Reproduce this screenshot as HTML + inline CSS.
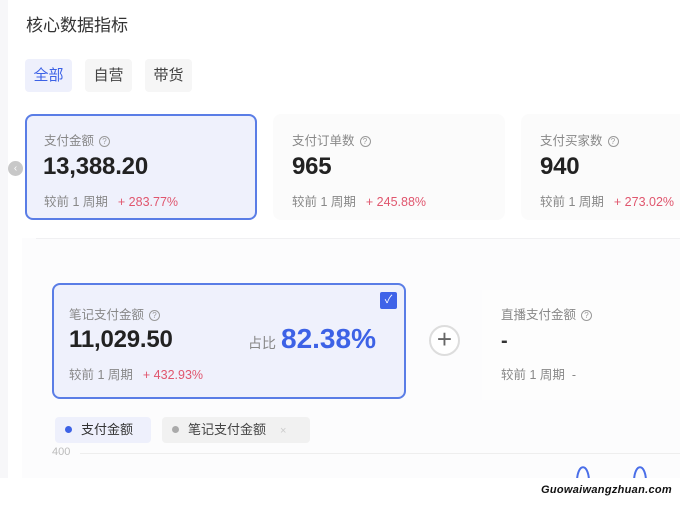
<!DOCTYPE html>
<html><head><meta charset="utf-8"><style>
*{margin:0;padding:0;box-sizing:border-box}
body{width:680px;height:506px;overflow:hidden;background:#fff;font-family:"Liberation Sans","Noto Sans CJK SC",sans-serif;position:relative;color:#222}
.abs{position:absolute}
.strip{left:0;top:0;width:8px;height:478px;background:#f7f7f9}
.title{left:26px;top:11px;font-size:17px;color:#333}
.tab{top:59px;height:33px;width:47px;border-radius:4px;font-size:15px;line-height:33px;text-align:center;background:#f6f6f6;color:#444}
.card{top:114px;width:232px;height:106px;border-radius:8px;background:#fbfbfb}
.lbl{font-size:12.5px;color:#888}
.q{display:inline-block;width:11px;height:11px;border:1px solid #999;border-radius:50%;font-size:8px;line-height:9px;text-align:center;color:#999;margin-left:5px;vertical-align:1px}
.num{font-size:24px;font-weight:bold;color:#222;letter-spacing:-0.2px}
.cmp{font-size:12.5px;color:#888}
.cmp b{font-weight:normal;color:#e0566e;margin-left:10px}
</style></head><body>
<div class="abs strip"></div>
<div class="abs title">核心数据指标</div>
<div class="abs tab" style="left:25px;background:#eef0fc;color:#3d62e6">全部</div>
<div class="abs tab" style="left:85px">自营</div>
<div class="abs tab" style="left:145px">带货</div>

<div class="abs" style="left:8px;top:161px;width:15px;height:15px;border-radius:50%;background:#c8c8c8;color:#fff;font-size:10px;line-height:15px;text-align:center">‹</div>

<div class="abs card" style="left:25px;border:2px solid #5a7de6;background:#eff1fc;width:232px"></div>
<div class="abs lbl" style="left:44px;top:130px">支付金额<span class="q">?</span></div>
<div class="abs num" style="left:43px;top:153px">13,388.20</div>
<div class="abs cmp" style="left:44px;top:191px">较前 1 周期<b>+ 283.77%</b></div>

<div class="abs card" style="left:273px"></div>
<div class="abs lbl" style="left:292px;top:130px">支付订单数<span class="q">?</span></div>
<div class="abs num" style="left:292px;top:153px">965</div>
<div class="abs cmp" style="left:292px;top:191px">较前 1 周期<b>+ 245.88%</b></div>

<div class="abs card" style="left:521px"></div>
<div class="abs lbl" style="left:540px;top:130px">支付买家数<span class="q">?</span></div>
<div class="abs num" style="left:540px;top:153px">940</div>
<div class="abs cmp" style="left:540px;top:191px">较前 1 周期<b>+ 273.02%</b></div>

<div class="abs" style="left:22px;top:238px;width:658px;height:240px;background:#fcfcfd"></div>
<div class="abs" style="left:36px;top:238px;width:644px;height:1px;background:#f0f0f2"></div>

<div class="abs" style="left:52px;top:283px;width:354px;height:116px;border:2px solid #5a7de6;border-radius:8px;background:#eff1fc"></div>
<div class="abs" style="left:380px;top:292px;width:17px;height:17px;border-radius:2px;background:#3f63e8;color:#fff;font-size:11px;line-height:17px;text-align:center">✓</div>
<div class="abs lbl" style="left:69px;top:304px">笔记支付金额<span class="q">?</span></div>
<div class="abs num" style="left:69px;top:326px">11,029.50</div>
<div class="abs" style="left:248px;top:333px;font-size:14px;color:#888">占比</div>
<div class="abs" style="left:281px;top:323px;font-size:28px;font-weight:bold;color:#3d62e6">82.38%</div>
<div class="abs cmp" style="left:69px;top:364px">较前 1 周期<b>+ 432.93%</b></div>

<div class="abs" style="left:429px;top:325px;width:31px;height:31px;border-radius:50%;border:2px solid #ddd;background:#fff;color:#666;font-size:26px;line-height:25px;text-align:center">+</div>

<div class="abs" style="left:482px;top:290px;width:198px;height:110px;background:#fdfdfd"></div>
<div class="abs lbl" style="left:501px;top:304px">直播支付金额<span class="q">?</span></div>
<div class="abs" style="left:501px;top:330px;font-size:20px;font-weight:bold;color:#333">-</div>
<div class="abs cmp" style="left:501px;top:364px">较前 1 周期 &nbsp;-</div>

<div class="abs" style="left:55px;top:417px;width:96px;height:26px;border-radius:4px;background:#eef0fc;font-size:13px;line-height:26px;padding-left:10px;color:#333"><span style="display:inline-block;width:7px;height:7px;border-radius:50%;background:#3d62e6;margin-right:9px;vertical-align:1px"></span>支付金额</div>
<div class="abs" style="left:162px;top:417px;width:148px;height:26px;border-radius:4px;background:#f1f1f1;font-size:13px;line-height:26px;padding-left:10px;color:#444"><span style="display:inline-block;width:7px;height:7px;border-radius:50%;background:#aaa;margin-right:9px;vertical-align:1px"></span>笔记支付金额<span style="color:#ccc;margin-left:14px;font-size:11px">×</span></div>

<div class="abs" style="left:52px;top:446px;font-size:11px;color:#bbb">400</div>
<div class="abs" style="left:80px;top:453px;width:600px;height:1px;background:#eee"></div>
<svg class="abs" style="left:570px;top:455px" width="110" height="25"><path d="M7 25 C8 8 18 8 19 25 M64 25 C65 8 75 8 76 25" stroke="#4a6ee8" stroke-width="2" fill="none"/></svg>

<div class="abs" style="left:0;top:478px;width:680px;height:28px;background:#fff"></div>
<div class="abs" style="left:541px;top:484px;font-size:11px;font-weight:bold;font-style:italic;color:#111;letter-spacing:0.3px">Guowaiwangzhuan.com</div>
</body></html>
